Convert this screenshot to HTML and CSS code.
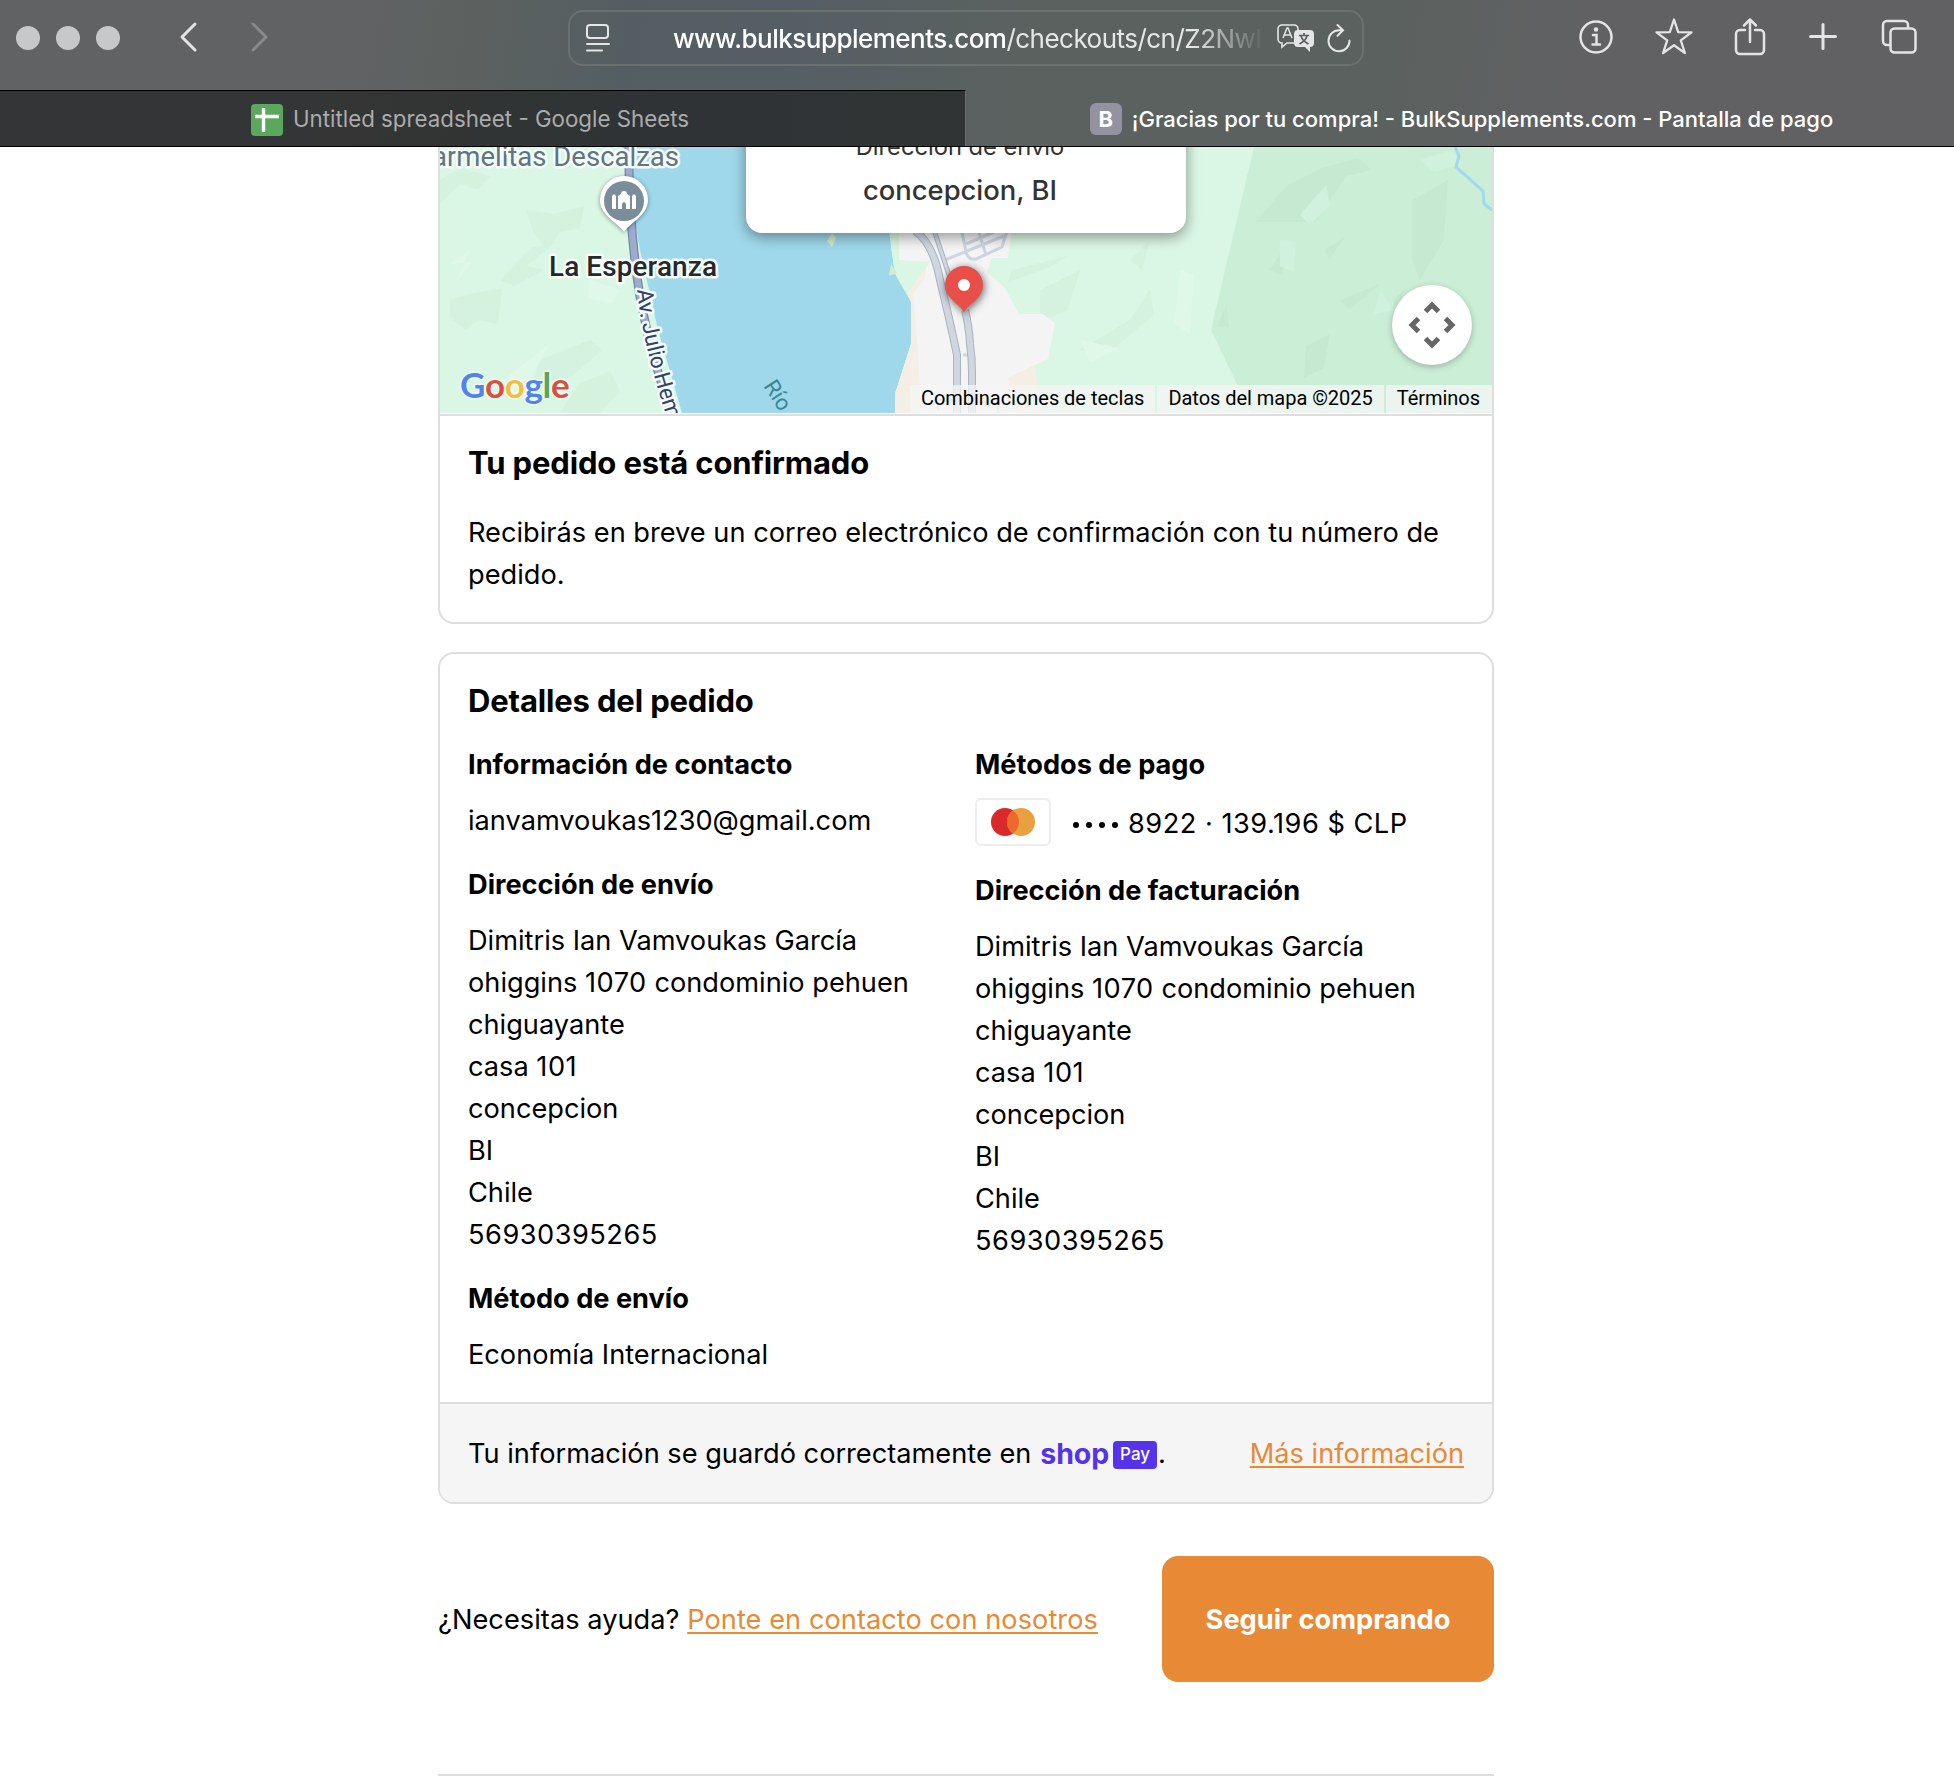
FILE: index.html
```html
<!DOCTYPE html>
<html lang="es">
<head>
<meta charset="utf-8">
<title>¡Gracias por tu compra!</title>
<link rel="stylesheet" href="styles.css">
</head>
<body>
<header class="browser">
  <div class="toolbar">
    <div class="lights"><i></i><i></i><i></i></div>
    <svg class="nav" viewBox="0 0 96 40" width="96" height="40"><path d="M18 7 5 20l13 13" fill="none" stroke="#e4e4e5" stroke-width="3" stroke-linecap="round" stroke-linejoin="round"/><path d="M76 7l13 13-13 13" fill="none" stroke="#88898a" stroke-width="3" stroke-linecap="round" stroke-linejoin="round"/></svg>
    <div class="address">
      <svg class="reader" viewBox="0 0 24 28" width="24" height="28" fill="none" stroke="#e4e6e6" stroke-width="2" stroke-linecap="round"><rect x="1" y="1" width="21" height="13" rx="3"/><path d="M1 20h22M1 26.500h15"/></svg>
      <span class="url"><b>www.bulksupplements.com</b>/checkouts/cn/Z2NwL</span>
      <svg class="translate" viewBox="0 0 40 30" width="40" height="30"><path d="M6 2h12a4 4 0 0 1 4 4v10a4 4 0 0 1-4 4h-7l-5 4v-4a4 4 0 0 1-4-4V6a4 4 0 0 1 4-4Z" fill="none" stroke="#e4e6e6" stroke-width="1.600"/><path d="m7 15 4-10h1l4 10M8.500 12h6" fill="none" stroke="#e4e6e6" stroke-width="1.500"/><path d="M22 7h12a4 4 0 0 1 4 4v9a4 4 0 0 1-4 4v5l-5-5h-7a4 4 0 0 1-4-4v-9a4 4 0 0 1 4-4Z" fill="#e4e6e6"/><path d="M23 12.500h10M28 10v2.500M31 13c-1 4-4 6-7.500 8M25 13c1 4 4 6 7.500 8" fill="none" stroke="#5a605f" stroke-width="1.600"/></svg>
      <svg class="reload" viewBox="0 0 24 30" width="24" height="30" fill="none" stroke="#e4e6e6" stroke-width="2" stroke-linecap="round"><path d="M14.500 7.300H12a10.500 10.500 0 1 0 10.500 10.200M10.500 2l5.500 5.300-5.500 5.500"/></svg>
    </div>
    <div class="actions">
      <svg viewBox="0 0 36 40" width="36" height="40" fill="none" stroke="#e4e4e5" stroke-width="2.500" stroke-linecap="round"><circle cx="18" cy="20" r="15.500"/><circle cx="18" cy="12.500" r="2.200" fill="#e4e4e5" stroke="none"/><path d="M15 18h3.500v9.500M14.500 27.500h7.500"/></svg>
      <svg viewBox="0 0 40 40" width="40" height="40" fill="none" stroke="#e4e4e5" stroke-width="2.300" stroke-linejoin="round"><path d="m20 2.500 4.200 12.700 13.300.1-10.700 8 4.100 12.700L20 28.200 9.100 36l4.100-12.700-10.700-8 13.300-.1Z"/></svg>
      <svg viewBox="0 0 32 40" width="32" height="40" fill="none" stroke="#e4e4e5" stroke-width="2.500" stroke-linecap="round" stroke-linejoin="round"><path d="M11 13H6a4 4 0 0 0-4 4v16a4 4 0 0 0 4 4h20a4 4 0 0 0 4-4V17a4 4 0 0 0-4-4h-5M16 25V3M10 8.500 16 2.500l6 6"/></svg>
      <svg viewBox="0 0 28 40" width="28" height="40" stroke="#e4e4e5" stroke-width="3" stroke-linecap="round"><path d="M14 7.500v24M1.500 19.500h25"/></svg>
      <svg viewBox="0 0 36 40" width="36" height="40" fill="none" stroke="#e4e4e5" stroke-width="2.500"><path d="M9 28H6a4 4 0 0 1-4-4V8a4 4 0 0 1 4-4h17a4 4 0 0 1 4 4v3"/><rect x="9.500" y="11.500" width="25" height="24" rx="4"/></svg>
    </div>
  </div>
  <div class="tabs">
    <div class="tab idle"><svg viewBox="0 0 32 32" width="32" height="32"><rect width="32" height="32" rx="4" fill="#5aa75d"/><path d="M12.500 4v24M4 12.500h24" stroke="#fff" stroke-width="3.400"/></svg><span>Untitled spreadsheet - Google Sheets</span></div>
    <div class="tab live"><em>B</em><span>¡Gracias por tu compra! - BulkSupplements.com - Pantalla de pago</span></div>
  </div>
</header>
<main class="page">
  <section class="card">
    <div class="map">
      <svg class="terrain" viewBox="440 147 1052 266" width="1052" height="266">
        <rect x="440" y="147" width="1052" height="266" fill="#daf6e4"/>
        <g fill="#d5f2df"><path d="M440 180l20-12 30 8-12 14-18-6-20 20ZM526 210l28 4 30-8-4 22-20 4-12 18-14-16ZM450 300l20-6 32-6-4 36-20-4-12 10-16-12ZM500 280l30-32 26-6-30 24 18 4-30 16ZM540 360l50-20 12 10-30 26-40 10ZM560 413l20-30 30-12 10 20-20 22ZM1040 290l40-20-12 40-28 12ZM1080 350l50-30 20-30 4 24-46 40ZM1130 260l20-20-8 30ZM1012 270l56-14-20 12-40 14Z"/></g>
        <g fill="#e0f8e8"><path d="M470 250l-20 14 22-2-16 20M590 280l30 10-8 14-24-6ZM1080 340l40 8-30 14ZM1180 270l14 4-4 60-16-10ZM490 390l60-46-30 50Z"/></g>
        <path d="M1254 147H1492V413H1251L1211 330Z" fill="#cbeed7"/>
        <g fill="#c6ead1"><path d="M1256 222l30-36 36-18 36-10 14 12-26 6-30 46ZM1412 200l36-20-4 60-24 40-8-20ZM1324 250l22-14-16 22ZM1306 346l24-12-6 34-20 10ZM1217 326l10-22 2 24ZM1270 270l16-26-4 30ZM1392 300l12-10-6 20ZM1340 300l40-16-30 26Z"/></g>
        <g fill="#d0f1dc"><path d="M1300 215l26-30 4 20-20 20ZM1280 240l16 2-2 30-14-6ZM1420 160l30-10 14 14-30 8ZM1380 290l14 20-20 4Z"/></g>
        <path d="M622 147H889V230l6 44 16 28v42l-16 50 1 19H682L658 330 640 250Z" fill="#9fd8ea"/>
        <path d="M629 147q-1 74 11 150 12 64 32 116" fill="none" stroke="#7585ad" stroke-width="9"/>
        <path d="M629 147q-1 74 11 150 12 64 32 116" fill="none" stroke="#9eabcd" stroke-width="6.500"/>
        <path d="M889 230H1012l-4 28h-16l-5 14 18 16 14 26h24l12 9-7 36-40 19 30 35H895V394l16-50V302l-22-70Z" fill="#f4f4f5"/>
        <path d="M932 258l-24 34 3 10v42l-16 50 1 19h25l-3-61-5-58 11-14 4-20ZM1008 378l27-13 6 48h-24Z" fill="#f4eee4"/>
        <path d="M889 230h10v30l31 2-22 30-14-24Z" fill="#daf6e4"/>
        <path d="M827 241l5-8 4 5-4 9ZM889 276l2-12 6 9Z" fill="#cfeecb"/>
        <g fill="none" stroke="#ccd5e2" stroke-width="3"><path d="M945 260l59-24M962 232l4 20q2 8 10 7l26-12 5-16M966 244l28-12M979 233l7 22M963 355h8M938 410v-10h24M976 402h22v11"/></g>
        <path d="M934 230l16 48" fill="none" stroke="#a9b3c1" stroke-width="5"/>
        <path d="M915 231q18 12 25 49 10 41 17 75v58M965 310q4 16 5 34 2 14 2 28v41" fill="none" stroke="#a9b3c1" stroke-width="8"/>
        <path d="M934 230l16 48" fill="none" stroke="#cfd6df" stroke-width="3"/>
        <path d="M915 231q18 12 25 49 10 41 17 75v58M965 310q4 16 5 34 2 14 2 28v41" fill="none" stroke="#cfd6df" stroke-width="6"/>
        <path d="M1455 147l4 9-3 11 27 24 1 13 8 6" fill="none" stroke="#9fd8ef" stroke-width="3"/>
        <g class="halo"><text x="432" y="166" font-size="27.500" textLength="247" lengthAdjust="spacing" fill="#5f7485">armelitas Descalzas</text>
        <text x="549" y="275.500" font-size="28" font-weight="500" textLength="168" fill="#26282b">La Esperanza</text>
        <path id="avenue" d="M637 290Q643 348 671 430" fill="none"/>
        <text font-size="22.500" fill="#33416d"><textPath href="#avenue" textLength="134">Av. Julio Hem</textPath></text></g>
        <text transform="translate(763 386) rotate(57)" font-size="22" fill="#3b8795">Río</text>
        <path d="M624 232c-4-8-24-16-24-32a24 24 0 0 1 48 0c0 16-20 24-24 32Z" fill="#fff" class="pin"/><circle cx="624" cy="201" r="20" fill="#7b8d99"/>
        <path d="M612 209v-13l2-2 2 2v13ZM618 209v-13l3-2q0-3 3-3t3 3l3 2v13h-4v-5q-2-4-4 0v5ZM632 209v-13l2-2 2 2v13Z" fill="#fff"/>
        <path d="M964 313c-3-9-19-14-19-28a19 19 0 0 1 38 0c0 14-16 19-19 28Z" fill="#e84f48" class="marker"/><circle cx="964" cy="285" r="6" fill="#fff"/>
      </svg>
      <div class="google"><i>G</i><i>o</i><i>o</i><i>g</i><i>l</i><i>e</i></div>
      <div class="bubble"><span>Dirección de envío</span><strong>concepcion, BI</strong></div>
      <div class="pan"><svg viewBox="0 0 80 80" width="80" height="80" fill="none" stroke="#666" stroke-width="5"><path d="M33.500 26.500 40 20l6.500 6.500M33.500 53.500 40 60l6.500-6.500M26.500 33.500 20 40l6.500 6.500M53.500 33.500 60 40l-6.500 6.500"/></svg></div>
      <div class="legal"><span>Combinaciones de teclas</span><span>Datos del mapa ©2025</span><span>Términos</span></div>
    </div>
    <div class="confirm"><h2>Tu pedido está confirmado</h2><p>Recibirás en breve un correo electrónico de confirmación con tu número de pedido.</p></div>
  </section>
  <section class="card">
    <div class="details">
      <h2>Detalles del pedido</h2>
      <div class="columns">
        <div>
          <h3>Información de contacto</h3><p>ianvamvoukas1230@gmail.com</p>
          <h3>Dirección de envío</h3><p>Dimitris Ian Vamvoukas García<br>ohiggins <span class="digits">1070</span> condominio pehuen<br>chiguayante<br>casa <span class="digits">101</span><br>concepcion<br>BI<br>Chile<br><span class="digits">56930395265</span></p>
          <h3>Método de envío</h3><p>Economía Internacional</p>
        </div>
        <div>
          <h3>Métodos de pago</h3>
          <div class="payment"><svg viewBox="0 0 76 48" width="76" height="48"><rect x="1" y="1" width="74" height="46" rx="5" fill="#fff" stroke="#ededed" stroke-width="2"/><circle cx="30" cy="24" r="14" fill="#d9292b"/><circle cx="46" cy="24" r="14" fill="#e9a140"/><path d="M38 12.500a14 14 0 0 1 0 23 14 14 0 0 1 0-23Z" fill="#ec6a2c"/></svg><span class="dots"><i></i><i></i><i></i><i></i></span><span class="digits">8922 · 139.196 $ CLP</span></div>
          <h3>Dirección de facturación</h3><p>Dimitris Ian Vamvoukas García<br>ohiggins <span class="digits">1070</span> condominio pehuen<br>chiguayante<br>casa <span class="digits">101</span><br>concepcion<br>BI<br>Chile<br><span class="digits">56930395265</span></p>
        </div>
      </div>
    </div>
    <div class="saved"><span>Tu información se guardó correctamente en</span><span class="shop">shop</span><span class="pay">Pay</span><span>.</span><a>Más información</a></div>
  </section>
  <div class="help"><p>¿Necesitas ayuda? <a>Ponte en contacto con nosotros</a></p><button>Seguir comprando</button></div>
  <hr>
</main>
</body>
</html>
```
FILE: styles.css
```css
* { box-sizing: border-box; }
body { margin: 0; height: 1784px; overflow: hidden; background: #fff; color: #000; font: 27.2px/42px Inter, sans-serif; }
h2, h3, p { margin: 0; }
a { color: #e88a35; text-decoration: underline; text-decoration-thickness: 2px; text-underline-offset: 3px; }

.browser { height: 147px; background: linear-gradient(100deg, #616264 0 17%, #5c615f 24%, #545e62 32%, #555e65 40%, #5b615f 52%, #5a615e 68%, #616163 80%, #616163); border-bottom: 1px solid #000; }
.toolbar { height: 90px; display: flex; align-items: flex-start; }
.lights { display: flex; gap: 16px; padding: 26px 0 0 16px; }
.lights i { width: 24px; height: 24px; border-radius: 50%; background: #c7c8ca; }
.nav { margin: 17px 0 0 57px; }
.address { width: 796px; height: 56px; margin: 10px 0 0 295px; padding-left: 16px; border: 2px solid #6b7071; border-radius: 15px; display: flex; align-items: center; }
.reader { margin-top: -1px; }
.url { width: 587px; margin-left: 63px; padding-top: 1px; overflow: hidden; white-space: nowrap; font-size: 26px; letter-spacing: -.52px; color: #e5e7e7; -webkit-mask-image: linear-gradient(90deg, #000 520px, transparent 592px); mask-image: linear-gradient(90deg, #000 520px, transparent 592px); }
.url b { font-weight: 500; color: #fff; }
.translate { margin-left: 16px; }
.reload { margin-left: 11px; }
.actions { display: flex; margin: 17px 0 0 214px; }
.actions svg:nth-child(2) { margin-left: 40px; }
.actions svg:nth-child(3) { margin-left: 40px; }
.actions svg:nth-child(4) { margin-left: 43px; }
.actions svg:nth-child(5) { margin-left: 44px; }
.tabs { display: flex; height: 56px; font-size: 22px; }
.tab { display: flex; align-items: center; justify-content: center; gap: 10px; white-space: nowrap; padding-top: 2px; }
.tab span { margin-top: -1px; }
.idle { width: 966px; padding-right: 25px; font-size: 22.3px; background: rgba(16,16,16,.55); border-top: 1px solid #000; border-right: 1px solid #6b6d6e; color: #aaacac; }
.live { width: 988px; padding-left: 3px; color: #fff; font-weight: 500; }
.tab em { width: 32px; height: 32px; border-radius: 6px; background: #9392a1; font: 700 22px/32px Inter, sans-serif; text-align: center; }

.page { width: 1056px; margin-left: 438px; }
.card { border: 2px solid #dedede; border-radius: 16px; overflow: hidden; }
.card:first-child { border-top: 0; border-radius: 0 0 16px 16px; height: 477px; }
.map { position: relative; height: 269px; overflow: hidden; border-bottom: 2px solid #dedede; font-family: Roboto, sans-serif; }
.terrain { display: block; }
.halo text { stroke: #f4fcf7; stroke-width: 5px; stroke-linejoin: round; paint-order: stroke; }
.pin { filter: drop-shadow(0 1px 2px rgba(0,0,0,.4)); }
.marker { filter: drop-shadow(1px 2px 4px rgba(0,0,0,.6)); }
.google { position: absolute; left: 20px; top: 216px; font: 700 35px/42px Lato, sans-serif; letter-spacing: -.3px; text-shadow: 0 0 3px #fff, 0 0 3px #fff; }
.google i { font-style: normal; color: #4f83ee; }
.google i:nth-child(2), .google i:nth-child(6) { color: #d8503f; }
.google i:nth-child(3) { color: #f3bd42; }
.google i:nth-child(5) { color: #58a55c; }
.bubble { position: absolute; left: 306px; top: -60px; width: 440px; height: 146px; padding: 41px 12px 0 0; border-radius: 0 0 16px 16px; background: #fff; box-shadow: 0 4px 14px rgba(0,0,0,.4); color: #333; font: 23.7px/38px Inter, sans-serif; display: flex; flex-direction: column; align-items: center; }
.bubble strong { font-size: 27.4px; font-weight: 500; line-height: 48px; }
.pan { position: absolute; left: 952px; top: 138px; width: 80px; height: 80px; border-radius: 50%; background: #fff; box-shadow: 0 2px 6px rgba(0,0,0,.25); }
.pan svg { display: block; }
.legal { position: absolute; right: 0; top: 238px; display: flex; gap: 2px; height: 28px; font-size: 20px; line-height: 26px; letter-spacing: -.03px; white-space: nowrap; }
.legal span { padding: 0 11px; background: rgba(245,245,245,.75); }
.legal span:last-child { padding-right: 12px; }
.confirm { padding: 26px 28px 0; }
h2 { font-size: 31px; line-height: 42px; font-weight: 700; letter-spacing: -.15px; }
.confirm p { margin-top: 28px; }
.card + .card { margin-top: 28px; height: 852px; display: flex; flex-direction: column; }
.details { flex: 1; padding: 26px 28px 0; }
.columns { display: grid; grid-template-columns: 507px 1fr; margin-top: 22px; white-space: nowrap; }
h3 { font-size: 27.2px; line-height: 42px; font-weight: 700; }
.columns p { margin: 14px 0 22px; }
.digits { letter-spacing: .5px; }
.payment { display: flex; align-items: center; height: 48px; margin: 14px 0 22px; }
.payment svg { margin-top: -4px; }
.dots { display: flex; gap: 7px; margin: 2px 10px 0 22px; }
.dots i { width: 6px; height: 6px; border-radius: 50%; background: #000; }
.saved { height: 100px; border-top: 2px solid #dedede; background: #f5f5f5; padding: 2px 28px 0; display: flex; align-items: center; white-space: nowrap; }
.saved a { margin-left: auto; }
.shop { margin-left: 9px; color: #5433eb; font-size: 28.500px; font-weight: 700; letter-spacing: -.1px; }
.pay { width: 44px; height: 28px; margin: 2px 1px 0 4px; border-radius: 4px; background: #5433eb; color: #fff; font-size: 17px; line-height: 27px; font-weight: 500; text-align: center; }
.help { display: flex; justify-content: space-between; align-items: center; height: 126px; margin-top: 52px; white-space: nowrap; }
.help p { padding-top: 2px; letter-spacing: .04px; }
button { width: 332px; height: 126px; padding: 2px 0 0; border: 0; border-radius: 16px; background: #e88a35; color: #fff; font: 700 27.2px/42px Inter, sans-serif; }
hr { height: 2px; margin: 92px 0 0; border: 0; background: #dedede; }
```
